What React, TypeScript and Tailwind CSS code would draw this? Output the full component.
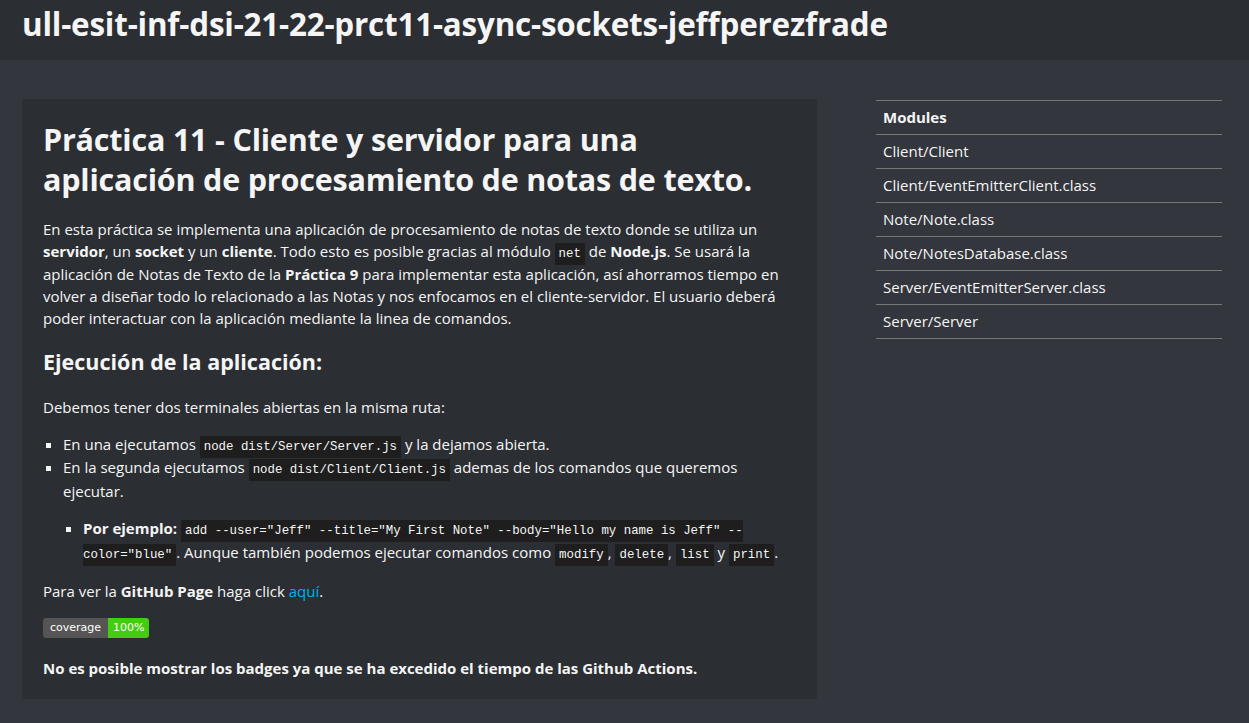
import React from 'react'

const MODULES = [
  'Client/Client',
  'Client/EventEmitterClient.class',
  'Note/Note.class',
  'Note/NotesDatabase.class',
  'Server/EventEmitterServer.class',
  'Server/Server',
]

function Code({ children }: { children: React.ReactNode }) {
  return (
    <code className="bg-[#1e1e1e] px-[4px] py-[4px] text-[12.4px] leading-none text-[#f5f5f5] [font-family:'Liberation_Mono',monospace]">
      {children}
    </code>
  )
}

export default function App() {
  return (
    <div className="min-h-[723px] bg-[#33363d] text-[#f5f5f5] [font-family:'Open_Sans',sans-serif]">
      {/* Header */}
      <header className="h-[60px] bg-[#2b2e33] px-[22px] flex items-center">
        <h1 className="text-[31.4px] font-bold leading-none tracking-[-0.2px] pb-[12px]">
          ull-esit-inf-dsi-21-22-prct11-async-sockets-jeffperezfrade
        </h1>
      </header>

      <div className="grid grid-cols-[795px_346px] gap-[59px] pl-[22px] pt-[39px]">
        {/* Main card */}
        <main className="bg-[#2b2e33] px-[21px] pt-[20px] pb-[20px] text-[15px] leading-[22.3px]">
          <h2 className="text-[30.5px] font-bold leading-[40px] tracking-[-0.2px]">
            Práctica 11 - Cliente y servidor para una aplicación de procesamiento de notas de texto.
          </h2>
          <p className="mt-[19px]">
            En esta práctica se implementa una aplicación de procesamiento de notas de texto donde se utiliza un{' '}
            <b>servidor</b>, un <b>socket</b> y un <b>cliente</b>. Todo esto es posible gracias al módulo <Code>net</Code> de{' '}
            <b>Node.js</b>. Se usará la aplicación de Notas de Texto de la <b>Práctica 9</b> para implementar esta aplicación, así
            ahorramos tiempo en volver a diseñar todo lo relacionado a las Notas y nos enfocamos en el cliente-servidor. El usuario
            deberá poder interactuar con la aplicación mediante la linea de comandos.
          </p>

          <h3 className="mt-[18px] text-[21.5px] font-bold leading-[30px]">Ejecución de la aplicación:</h3>

          <p className="mt-[19px]">Debemos tener dos terminales abiertas en la misma ruta:</p>

          <ul className="mt-[14px] pl-[20px] list-[square] leading-[23.5px]">
            <li>
              En una ejecutamos <Code>node dist/Server/Server.js</Code> y la dejamos abierta.
            </li>
            <li>
              En la segunda ejecutamos <Code>node dist/Client/Client.js</Code> ademas de los comandos que queremos ejecutar.
              <ul className="mt-[14px] pl-[20px] list-[square]">
                <li>
                  <b>Por ejemplo:</b>{' '}
                  <Code>
                    add --user="Jeff" --title="My First Note" --body="Hello my name is Jeff" --color="blue"
                  </Code>
                  . Aunque también podemos ejecutar comandos como <Code>modify</Code>, <Code>delete</Code>, <Code>list</Code> y{' '}
                  <Code>print</Code>.
                </li>
              </ul>
            </li>
          </ul>

          <p className="mt-[16px]">
            Para ver la <b>GitHub Page</b> haga click <a className="text-[#00aff4]">aquí</a>.
          </p>

          <div className="mt-[15px] flex h-[20px] w-[106px] overflow-hidden rounded-[3px] text-[11px] leading-[20px] [font-family:'DejaVu_Sans',sans-serif]">
            <span className="bg-[#555] px-[7px] text-white">coverage</span>
            <span className="flex-1 bg-[#4c1] px-[5px] text-white">100%</span>
          </div>

          <p className="mt-[19px] font-bold">
            No es posible mostrar los badges ya que se ha excedido el tiempo de las Github Actions.
          </p>
        </main>

        {/* Sidebar */}
        <nav className="pt-[1px] text-[15px]">
          <ul className="border-t border-[#777]">
            <li className="h-[34px] flex items-center px-[7px] border-b border-[#777] font-bold">Modules</li>
            {MODULES.map(m => (
              <li key={m} className="h-[34px] flex items-center px-[7px] border-b border-[#777]">
                {m}
              </li>
            ))}
          </ul>
        </nav>
      </div>
    </div>
  )
}
